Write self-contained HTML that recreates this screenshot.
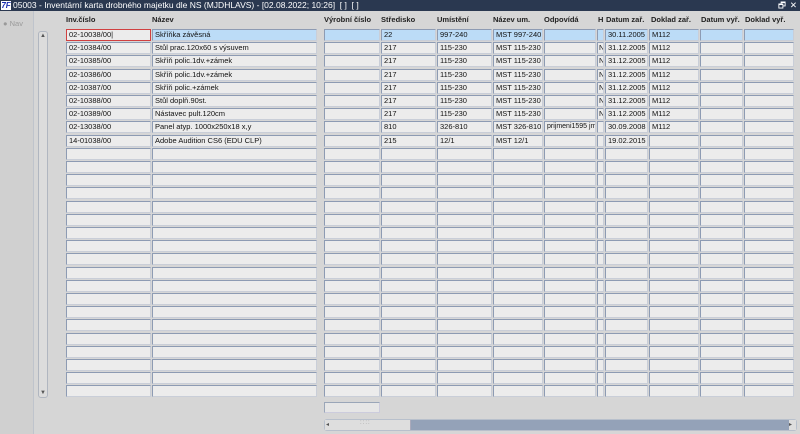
<!DOCTYPE html>
<html><head><meta charset="utf-8"><style>
*{margin:0;padding:0;box-sizing:border-box}
body{width:800px;height:434px;background:#d6d6d6;font-family:"Liberation Sans",sans-serif;font-size:8px;color:#111;position:relative;overflow:hidden}
.tb{position:absolute;left:0;top:0;width:800px;height:11px;background:#2a3850;color:#fff;font-size:8.5px;line-height:11px;padding-left:13px;white-space:nowrap}
.logo{position:absolute;left:1px;top:1px;width:10px;height:9px;background:#fff;color:#1a2fb0;font-weight:bold;font-style:italic;font-size:8px;line-height:9px;text-align:center}
.h{position:absolute;top:15px;font-weight:bold;font-size:7.5px;color:#222}
.r{position:absolute;left:0;width:800px;height:12px}
.r span{position:absolute;top:0;height:12px;background:#ececec;border:1px solid #8d9bb3;border-right-color:#c9ced8;border-bottom-color:#c9ced8;line-height:10px;padding-left:2px;white-space:nowrap;overflow:hidden;font-size:7.5px}
.s span{background:#bcdcf7}
.a{left:66px;width:85px}.b{left:152px;width:165px}.c{left:324px;width:56px}.d{left:381px;width:55px}.e{left:437px;width:55px}.f{left:493px;width:50px}.g{left:544px;width:52px}.i{left:597px;width:7px}.j{left:605px;width:43px}.k{left:649px;width:50px}.l{left:700px;width:43px}.m{left:744px;width:50px}
.r .i{padding-left:1px}
</style></head><body>
<div class="tb"><div class="logo">7F</div>05003 - Inventární karta drobného majetku dle NS (MJDHLAVS) - [02.08.2022; 10:26] &nbsp;[ ] &nbsp;[ ]<span style="position:absolute;right:14px;top:0">🗗</span><span style="position:absolute;right:3px;top:0">✕</span></div>
<div style="position:absolute;left:0;top:11px;width:34px;height:423px;background:#d0d0d0;border-right:1px solid #bfc4cc"></div>
<div style="position:absolute;left:3px;top:19px;color:#9a9a9a;font-size:7.5px">● Nav</div>
<div style="position:absolute;left:38px;top:31px;width:10px;height:367px;background:#dcdcdc;border:1px solid #b0b6c0;border-radius:3px"></div>
<div style="position:absolute;left:39px;top:32px;width:8px;height:8px;font-size:6px;line-height:8px;text-align:center;color:#555">▲</div>
<div style="position:absolute;left:39px;top:389px;width:8px;height:8px;font-size:6px;line-height:8px;text-align:center;color:#555">▼</div>
<div class="h" style="left:66px">Inv.číslo</div><div class="h" style="left:152px">Název</div><div class="h" style="left:324px">Výrobní číslo</div><div class="h" style="left:381px">Středisko</div><div class="h" style="left:437px">Umístění</div><div class="h" style="left:493px">Název um.</div><div class="h" style="left:544px">Odpovídá</div><div class="h" style="left:598px">H</div><div class="h" style="left:606px">Datum zař.</div><div class="h" style="left:651px">Doklad zař.</div><div class="h" style="left:701px">Datum vyř.</div><div class="h" style="left:745px">Doklad vyř.</div>
<div class="r s" style="top:29px"><span class="a" style="border:1px solid #d04040;background:#ececec">02-10038/00|</span><span class="b">Skříňka závěsná</span><span class="c"></span><span class="d">22</span><span class="e">997-240</span><span class="f">MST 997-240</span><span class="g"></span><span class="i"></span><span class="j">30.11.2005</span><span class="k">M112</span><span class="l"></span><span class="m"></span></div>
<div class="r" style="top:42px"><span class="a">02-10384/00</span><span class="b">Stůl prac.120x60 s výsuvem</span><span class="c"></span><span class="d">217</span><span class="e">115-230</span><span class="f">MST 115-230</span><span class="g"></span><span class="i">N</span><span class="j">31.12.2005</span><span class="k">M112</span><span class="l"></span><span class="m"></span></div>
<div class="r" style="top:55px"><span class="a">02-10385/00</span><span class="b">Skříň polic.1dv.+zámek</span><span class="c"></span><span class="d">217</span><span class="e">115-230</span><span class="f">MST 115-230</span><span class="g"></span><span class="i">N</span><span class="j">31.12.2005</span><span class="k">M112</span><span class="l"></span><span class="m"></span></div>
<div class="r" style="top:69px"><span class="a">02-10386/00</span><span class="b">Skříň polic.1dv.+zámek</span><span class="c"></span><span class="d">217</span><span class="e">115-230</span><span class="f">MST 115-230</span><span class="g"></span><span class="i">N</span><span class="j">31.12.2005</span><span class="k">M112</span><span class="l"></span><span class="m"></span></div>
<div class="r" style="top:82px"><span class="a">02-10387/00</span><span class="b">Skříň polic.+zámek</span><span class="c"></span><span class="d">217</span><span class="e">115-230</span><span class="f">MST 115-230</span><span class="g"></span><span class="i">N</span><span class="j">31.12.2005</span><span class="k">M112</span><span class="l"></span><span class="m"></span></div>
<div class="r" style="top:95px"><span class="a">02-10388/00</span><span class="b">Stůl doplň.90st.</span><span class="c"></span><span class="d">217</span><span class="e">115-230</span><span class="f">MST 115-230</span><span class="g"></span><span class="i">N</span><span class="j">31.12.2005</span><span class="k">M112</span><span class="l"></span><span class="m"></span></div>
<div class="r" style="top:108px"><span class="a">02-10389/00</span><span class="b">Nástavec pult.120cm</span><span class="c"></span><span class="d">217</span><span class="e">115-230</span><span class="f">MST 115-230</span><span class="g"></span><span class="i">N</span><span class="j">31.12.2005</span><span class="k">M112</span><span class="l"></span><span class="m"></span></div>
<div class="r" style="top:121px"><span class="a">02-13038/00</span><span class="b">Panel atyp. 1000x250x18 x,y</span><span class="c"></span><span class="d">810</span><span class="e">326-810</span><span class="f">MST 326-810</span><span class="g" style="font-size:7px">prijmeni1595 jm</span><span class="i"></span><span class="j">30.09.2008</span><span class="k">M112</span><span class="l"></span><span class="m"></span></div>
<div class="r" style="top:135px"><span class="a">14-01038/00</span><span class="b">Adobe Audition CS6 (EDU CLP)</span><span class="c"></span><span class="d">215</span><span class="e">12/1</span><span class="f">MST 12/1</span><span class="g"></span><span class="i"></span><span class="j">19.02.2015</span><span class="k"></span><span class="l"></span><span class="m"></span></div>
<div class="r" style="top:148px"><span class="a"></span><span class="b"></span><span class="c"></span><span class="d"></span><span class="e"></span><span class="f"></span><span class="g"></span><span class="i"></span><span class="j"></span><span class="k"></span><span class="l"></span><span class="m"></span></div>
<div class="r" style="top:161px"><span class="a"></span><span class="b"></span><span class="c"></span><span class="d"></span><span class="e"></span><span class="f"></span><span class="g"></span><span class="i"></span><span class="j"></span><span class="k"></span><span class="l"></span><span class="m"></span></div>
<div class="r" style="top:174px"><span class="a"></span><span class="b"></span><span class="c"></span><span class="d"></span><span class="e"></span><span class="f"></span><span class="g"></span><span class="i"></span><span class="j"></span><span class="k"></span><span class="l"></span><span class="m"></span></div>
<div class="r" style="top:187px"><span class="a"></span><span class="b"></span><span class="c"></span><span class="d"></span><span class="e"></span><span class="f"></span><span class="g"></span><span class="i"></span><span class="j"></span><span class="k"></span><span class="l"></span><span class="m"></span></div>
<div class="r" style="top:201px"><span class="a"></span><span class="b"></span><span class="c"></span><span class="d"></span><span class="e"></span><span class="f"></span><span class="g"></span><span class="i"></span><span class="j"></span><span class="k"></span><span class="l"></span><span class="m"></span></div>
<div class="r" style="top:214px"><span class="a"></span><span class="b"></span><span class="c"></span><span class="d"></span><span class="e"></span><span class="f"></span><span class="g"></span><span class="i"></span><span class="j"></span><span class="k"></span><span class="l"></span><span class="m"></span></div>
<div class="r" style="top:227px"><span class="a"></span><span class="b"></span><span class="c"></span><span class="d"></span><span class="e"></span><span class="f"></span><span class="g"></span><span class="i"></span><span class="j"></span><span class="k"></span><span class="l"></span><span class="m"></span></div>
<div class="r" style="top:240px"><span class="a"></span><span class="b"></span><span class="c"></span><span class="d"></span><span class="e"></span><span class="f"></span><span class="g"></span><span class="i"></span><span class="j"></span><span class="k"></span><span class="l"></span><span class="m"></span></div>
<div class="r" style="top:253px"><span class="a"></span><span class="b"></span><span class="c"></span><span class="d"></span><span class="e"></span><span class="f"></span><span class="g"></span><span class="i"></span><span class="j"></span><span class="k"></span><span class="l"></span><span class="m"></span></div>
<div class="r" style="top:267px"><span class="a"></span><span class="b"></span><span class="c"></span><span class="d"></span><span class="e"></span><span class="f"></span><span class="g"></span><span class="i"></span><span class="j"></span><span class="k"></span><span class="l"></span><span class="m"></span></div>
<div class="r" style="top:280px"><span class="a"></span><span class="b"></span><span class="c"></span><span class="d"></span><span class="e"></span><span class="f"></span><span class="g"></span><span class="i"></span><span class="j"></span><span class="k"></span><span class="l"></span><span class="m"></span></div>
<div class="r" style="top:293px"><span class="a"></span><span class="b"></span><span class="c"></span><span class="d"></span><span class="e"></span><span class="f"></span><span class="g"></span><span class="i"></span><span class="j"></span><span class="k"></span><span class="l"></span><span class="m"></span></div>
<div class="r" style="top:306px"><span class="a"></span><span class="b"></span><span class="c"></span><span class="d"></span><span class="e"></span><span class="f"></span><span class="g"></span><span class="i"></span><span class="j"></span><span class="k"></span><span class="l"></span><span class="m"></span></div>
<div class="r" style="top:319px"><span class="a"></span><span class="b"></span><span class="c"></span><span class="d"></span><span class="e"></span><span class="f"></span><span class="g"></span><span class="i"></span><span class="j"></span><span class="k"></span><span class="l"></span><span class="m"></span></div>
<div class="r" style="top:333px"><span class="a"></span><span class="b"></span><span class="c"></span><span class="d"></span><span class="e"></span><span class="f"></span><span class="g"></span><span class="i"></span><span class="j"></span><span class="k"></span><span class="l"></span><span class="m"></span></div>
<div class="r" style="top:346px"><span class="a"></span><span class="b"></span><span class="c"></span><span class="d"></span><span class="e"></span><span class="f"></span><span class="g"></span><span class="i"></span><span class="j"></span><span class="k"></span><span class="l"></span><span class="m"></span></div>
<div class="r" style="top:359px"><span class="a"></span><span class="b"></span><span class="c"></span><span class="d"></span><span class="e"></span><span class="f"></span><span class="g"></span><span class="i"></span><span class="j"></span><span class="k"></span><span class="l"></span><span class="m"></span></div>
<div class="r" style="top:372px"><span class="a"></span><span class="b"></span><span class="c"></span><span class="d"></span><span class="e"></span><span class="f"></span><span class="g"></span><span class="i"></span><span class="j"></span><span class="k"></span><span class="l"></span><span class="m"></span></div>
<div class="r" style="top:385px"><span class="a"></span><span class="b"></span><span class="c"></span><span class="d"></span><span class="e"></span><span class="f"></span><span class="g"></span><span class="i"></span><span class="j"></span><span class="k"></span><span class="l"></span><span class="m"></span></div>
<div style="position:absolute;left:324px;top:402px;width:56px;height:11px;background:#e6e6e6;border:1px solid #9aa6b8;border-right-color:#ccd;border-bottom-color:#ccd"></div>
<div style="position:absolute;left:324px;top:419px;width:473px;height:12px;background:#94a2b8;border:1px solid #b8c0cc;border-radius:3px"></div>
<div style="position:absolute;left:325px;top:420px;width:86px;height:10px;background:#dedede;border-right:1px solid #aab"></div>
<div style="position:absolute;left:360px;top:420px;font-size:6px;color:#999;letter-spacing:1px">::::</div>
<div style="position:absolute;left:789px;top:420px;width:7px;height:10px;background:#dedede;font-size:6px;line-height:10px;color:#555">▸</div>
<div style="position:absolute;left:326px;top:420px;font-size:6px;line-height:10px;color:#555">◂</div>
</body></html>
